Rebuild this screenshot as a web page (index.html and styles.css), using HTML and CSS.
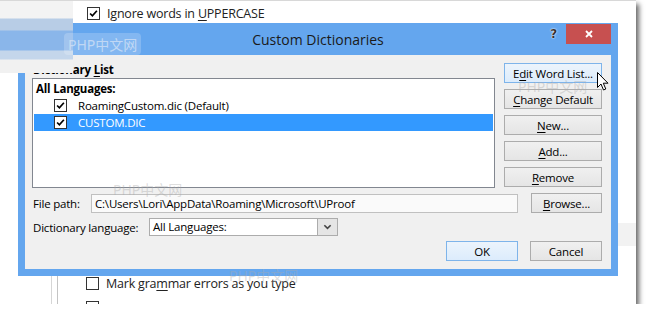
FILE: index.html
```html
<!DOCTYPE html>
<html lang="en">
<head>
    <meta charset="UTF-8">
    <meta name="viewport" content="width=device-width, initial-scale=1.0">
    <title>Custom Dictionaries</title>
    <link rel="stylesheet" href="styles.css">
</head>
<body>
    <div class="shot">
        <!-- Word Options, top part -->
        <div class="opt-row opt-top">
            <span class="cb"><svg viewBox="0 0 13 13"><path d="M2.5 6.5 L5.2 9.3 L10.5 3.2"/></svg></span>
            <span>Ignore words in <u>U</u>PPERCASE</span>
        </div>

        <!-- Dialog -->
        <div class="dialog">
            <div class="titlebar">
                <span></span>
                <span class="title">Custom Dictionaries</span>
                <span class="controls">
                    <span class="help">?</span>
                    <span class="close"><svg viewBox="0 0 10 10"><path d="M2 2 L8 8 M8 2 L2 8"/></svg></span>
                </span>
            </div>

            <div class="body">
                <div class="main">
                    <div class="list-col">
                        <div class="label bold">Dictionary <u>L</u>ist</div>
                        <div class="listbox">
                            <div class="row group">All Languages:</div>
                            <div class="row item">
                                <span class="cb"><svg viewBox="0 0 13 13"><path d="M2.5 6.5 L5.2 9.3 L10.5 3.2"/></svg></span>
                                RoamingCustom.dic (Default)
                            </div>
                            <div class="row item selected">
                                <span class="cb"><svg viewBox="0 0 13 13"><path d="M2.5 6.5 L5.2 9.3 L10.5 3.2"/></svg></span>
                                CUSTOM.DIC
                            </div>
                        </div>
                    </div>
                    <div class="btn-col">
                        <div class="btn focus">E<u>d</u>it Word List...</div>
                        <div class="btn"><u>C</u>hange Default</div>
                        <div class="btn"><u>N</u>ew...</div>
                        <div class="btn"><u>A</u>dd...</div>
                        <div class="btn"><u>R</u>emove</div>
                    </div>
                </div>

                <div class="field-row">
                    <span class="field-label path-label">File path:</span>
                    <div class="field">C:\Users\Lori\AppData\Roaming\Microsoft\UProof</div>
                    <div class="btn browse"><u>B</u>rowse...</div>
                </div>

                <div class="field-row lang-row">
                    <span class="field-label lang-label">Dictionary lan<u>g</u>uage:</span>
                    <div class="select">
                        <span class="select-text">All Languages:</span>
                        <span class="select-arrow"><svg viewBox="0 0 10 6"><path d="M1.5 1 L5 4.5 L8.5 1"/></svg></span>
                    </div>
                </div>

                <div class="action-row">
                    <div class="btn ok">OK</div>
                    <div class="btn">Cancel</div>
                </div>
            </div>
        </div>

        <!-- Word Options, bottom part -->
        <div class="opt-bottom">
            <div class="nav-edge"></div>
            <div class="opt-list">
                <div class="opt-row">
                    <span class="cb"></span>
                    <span>Mark gra<u>m</u>mar errors as you type</span>
                </div>
                <div class="opt-row">
                    <span class="cb"></span>
                </div>
            </div>
        </div>

        <!-- overlays -->
        <div class="fade"></div>
        <div class="side-band"></div>
        <svg class="cursor" viewBox="0 0 12 19"><path d="M0.5 0.5 L0.5 15.5 L4 12 L6.5 18 L8.8 17 L6.3 11.2 L11 11.2 Z"/></svg>
        <span class="wm wm1">PHP中文网</span>
        <span class="wm wm2">PHP中文网</span>
        <span class="wm wm3">PHP中文网</span>
        <span class="wm wm4">PHP中文网</span>
    </div>
</body>
</html>
```

FILE: styles.css
```css
/* Page */
body {
    margin: 0;
    background: #fff;
    font-family: "Open Sans", "Noto Sans CJK SC", sans-serif;
    font-size: 11.5px;
    letter-spacing: -0.2px;
    color: #000;
}

u {
    text-decoration-thickness: 1px;
    text-underline-offset: 2px;
}

.bold {
    font-weight: bold;
}

/* Screenshot frame */
.shot {
    position: relative;
    width: 636px;
    height: 304px;
    background: #fff;
    border-top: 1px solid #d8d8d8;
    box-sizing: border-box;
    box-shadow: 3px 4px 5px rgba(0, 0, 0, 0.6);
    overflow: hidden;
}

/* Checkbox */
.cb {
    display: inline-block;
    width: 13px;
    height: 13px;
    box-sizing: border-box;
    border: 1px solid #333;
    background: #fff;
    flex: none;
}

.cb svg {
    display: block;
    width: 11px;
    height: 11px;
}

.cb path {
    fill: none;
    stroke: #000;
    stroke-width: 2;
}

/* Word options rows */
.opt-row {
    display: flex;
    align-items: center;
    gap: 7px;
    font-size: 12.5px;
    color: #222;
}

.opt-top {
    height: 22px;
    padding-left: 87px;
    padding-top: 2px;
    box-sizing: border-box;
}

.opt-bottom {
    display: flex;
    height: 28px;
    margin-left: 51px;
}

.nav-edge {
    width: 5px;
    border-left: 1px solid #d6d6d6;
    border-right: 1px solid #c4c4c4;
    flex: none;
}

.opt-list {
    padding-left: 28px;
    padding-top: 1px;
}

.opt-list .opt-row {
    height: 24px;
    align-items: flex-start;
}

.opt-list .opt-row span:last-child {
    line-height: 13px;
}

/* Dialog */
.dialog {
    margin-left: 18px;
    width: 600px;
    height: 253px;
    box-sizing: border-box;
    border: 7px solid #64a6ee;
    border-top: 0;
    background: #64a6ee;
}

.titlebar {
    display: grid;
    grid-template-columns: 90px 1fr 90px;
    height: 32px;
}

.title {
    text-align: center;
    font-size: 14px;
    letter-spacing: 0;
    line-height: 33px;
    color: #1a1a1a;
}

.controls {
    display: flex;
    justify-content: flex-end;
    align-items: flex-start;
}

.help {
    font-family: "DejaVu Sans", sans-serif;
    font-weight: bold;
    font-size: 12px;
    color: #333;
    margin-top: 4px;
    margin-right: 9px;
    text-shadow: 0 0 2px #fff, 0 0 1px #fff;
}

.close {
    width: 45px;
    height: 20px;
    margin-top: 1px;
    background: #c75050;
    display: flex;
    align-items: center;
    justify-content: center;
}

.close svg {
    width: 10px;
    height: 10px;
}

.close path {
    stroke: #fff;
    stroke-width: 1.8;
}

.body {
    height: 214px;
    background: #f0f0f0;
    padding: 8px 9px 0 7px;
    box-sizing: border-box;
}

.main {
    display: flex;
    gap: 9px;
}

.list-col {
    width: 463px;
}

.label {
    height: 15px;
    line-height: 13px;
    padding-left: 1px;
}

.listbox {
    height: 110px;
    box-sizing: border-box;
    border: 1px solid #828790;
    background: #fff;
    padding: 1px;
}

.row {
    height: 17px;
    display: flex;
    align-items: center;
    gap: 11px;
}

.group {
    font-weight: bold;
    padding-left: 2px;
}

.item {
    padding-left: 20px;
}

.selected {
    background: #3399ff;
    color: #fff;
}

.btn-col {
    width: 98px;
    display: flex;
    flex-direction: column;
    gap: 6px;
}

/* Buttons */
.btn {
    height: 20px;
    box-sizing: border-box;
    border: 1px solid #acacac;
    background: linear-gradient(#f0f0f0, #e5e5e5);
    display: flex;
    align-items: center;
    justify-content: center;
    white-space: nowrap;
}

.btn.focus,
.btn.ok {
    border-color: #7eb4ea;
    background: linear-gradient(#ecf4fc, #dcecfc);
}

/* Rows below the list */
.field-row {
    display: flex;
    align-items: center;
    margin-top: 5px;
    height: 20px;
}

.field-label {
    padding-left: 1px;
    box-sizing: border-box;
    flex: none;
}

.path-label {
    width: 59px;
}

.field {
    width: 427px;
    height: 19px;
    box-sizing: border-box;
    border: 1px solid #c0c0c0;
    background: #fafafa;
    padding-left: 3px;
    line-height: 17px;
}

.browse {
    width: 71px;
    margin-left: 13px;
}

.lang-row {
    height: 18px;
}

.lang-label {
    width: 117px;
}

.select {
    width: 189px;
    height: 18px;
    box-sizing: border-box;
    border: 1px solid #acacac;
    background: #fff;
    display: flex;
}

.select-text {
    flex: 1;
    padding-left: 3px;
    line-height: 16px;
}

.select-arrow {
    width: 19px;
    border-left: 1px solid #acacac;
    background: #e5e5e5;
    display: flex;
    align-items: center;
    justify-content: center;
}

.select-arrow svg {
    width: 9px;
    height: 6px;
}

.select-arrow path {
    fill: none;
    stroke: #444;
    stroke-width: 1.8;
}

.action-row {
    display: flex;
    justify-content: flex-end;
    gap: 12px;
    margin-top: 5px;
}

.action-row .btn {
    width: 72px;
}

/* Overlays */
.fade {
    position: absolute;
    left: 0;
    top: 0;
    width: 73px;
    height: 72px;
    background: linear-gradient(#f3f3f3 0, #f3f3f3 17px, #b8cde6 18px, #b8cde6 29px, #8ab6ea 30px, #8ab6ea 49px, #c4d6eb 50px, #c4d6eb 58px, #f1f1f1 59px);
}

.side-band {
    position: absolute;
    left: 618px;
    top: 222px;
    width: 18px;
    height: 23px;
    background: #f2f2f2;
}

.cursor {
    position: absolute;
    left: 597px;
    top: 71px;
    width: 12px;
    height: 19px;
}

.cursor path {
    fill: #fff;
    stroke: #000;
    stroke-width: 1;
}

.wm {
    position: absolute;
    font-family: "Noto Sans", "Noto Sans CJK SC", sans-serif;
    font-size: 14px;
    letter-spacing: 0;
    color: rgba(170, 170, 170, 0.4);
}

.wm1 {
    left: 64px;
    top: 32px;
    padding: 1px 4px;
    background: rgba(255, 255, 255, 0.2);
    border-radius: 4px;
    color: rgba(210, 225, 245, 0.8);
}

.wm2 {
    left: 113px;
    top: 178px;
}

.wm3 {
    left: 229px;
    top: 264px;
}

.wm4 {
    left: 518px;
    top: 75px;
}
```
